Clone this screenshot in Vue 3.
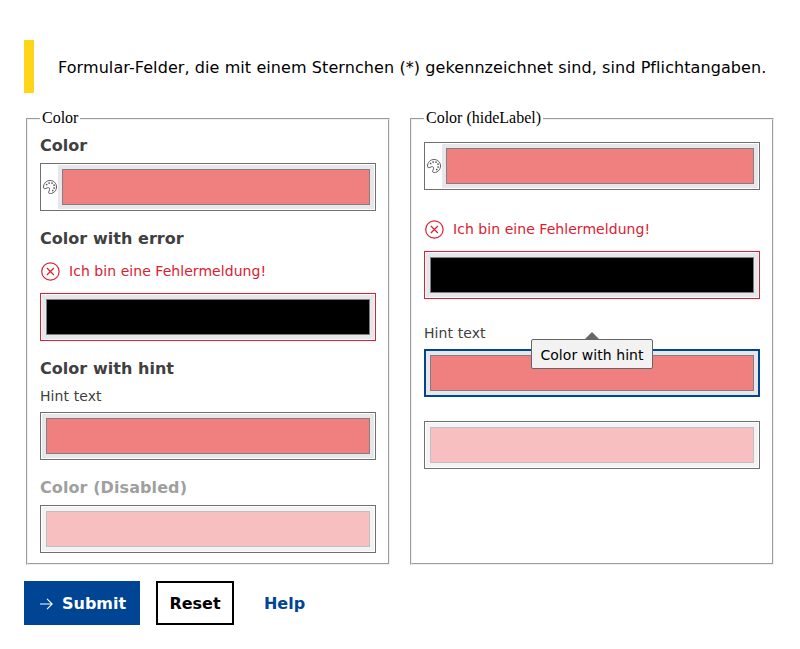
<script setup>
const columns = [
  {
    legend: 'Color',
    fields: [
      { label: 'Color', icon: true },
      { label: 'Color with error', error: 'Ich bin eine Fehlermeldung!', state: 'invalid' },
      { label: 'Color with hint', hint: 'Hint text' },
      { label: 'Color (Disabled)', state: 'disabled' }
    ]
  },
  {
    legend: 'Color (hideLabel)',
    hideLabel: true,
    fields: [
      { icon: true },
      { error: 'Ich bin eine Fehlermeldung!', state: 'invalid' },
      { hint: 'Hint text', state: 'focused', tooltip: 'Color with hint' },
      { state: 'disabled' }
    ]
  }
]
</script>

<template>
  <main class="page">
    <p class="notice"><span class="notice-text">Formular-Felder, die mit einem Sternchen (*) gekennzeichnet sind, sind Pflichtangaben.</span></p>

    <div class="columns">
      <fieldset v-for="col in columns" :key="col.legend" :class="{ compact: col.hideLabel }">
        <legend>{{ col.legend }}</legend>
        <div v-for="(f, i) in col.fields" :key="i" class="group" :class="[f.state, { 'with-error': f.error, 'with-hint': f.hint }]">
          <div v-if="f.label" class="label">{{ f.label }}</div>
          <div v-if="f.error" class="error">
            <svg width="20" height="20" viewBox="0 0 20 20" fill="none" stroke="currentColor" stroke-width="1.2">
              <circle cx="10.4" cy="10.5" r="8.7" />
              <path d="M6.9 7l7 7M13.9 7l-7 7" />
            </svg>
            <span>{{ f.error }}</span>
          </div>
          <div v-if="f.hint" class="hint">{{ f.hint }}</div>
          <div class="field">
            <span v-if="f.icon" class="icon">
              <svg width="14" height="14" viewBox="0 0 14 14" fill="none" stroke="#555" stroke-width="1">
                <path d="M.5 7.3C.5 3.4 3.4.5 7.1.5s6.4 2.9 6.4 6.5-2.8 6.5-6.2 6.5c-1.7 0-2-.8-1.5-1.9.6-1.2 1-2.2.7-3.1-.4-1-1.6-1.1-2.6-.5-1.3.8-3.4 1.200-3.400-.7z" />
                <g fill="#555" stroke="none">
                  <rect x="2.9" y="3.8" width="1.500" height="1.500" /><rect x="5.400" y="2.300" width="1.500" height="1.500" />
                  <rect x="8.300" y="2.400" width="1.500" height="1.500" /><rect x="10.300" y="4.400" width="1.500" height="1.500" />
                  <rect x="10.400" y="7.300" width="1.500" height="1.500" /><rect x="9" y="9.800" width="1.500" height="1.500" />
                </g>
              </svg>
            </span>
            <span class="well"><span class="swatch"></span></span>
            <span v-if="f.tooltip" class="tooltip">{{ f.tooltip }}</span>
          </div>
        </div>
      </fieldset>
    </div>

    <div class="actions">
      <button type="button" class="submit">
        <svg width="14" height="14" viewBox="0 0 14 14" fill="none" stroke="currentColor" stroke-width="1.1">
          <path d="M1 8h12M8 2.800l5.200 5.200L8 13.200" />
        </svg>
        <span>Submit</span>
      </button>
      <button type="button" class="reset">Reset</button>
      <button type="button" class="help">Help</button>
    </div>
  </main>
</template>

<style>
body { margin: 0; background: #fff; }
</style>

<style scoped>
* { box-sizing: border-box; }
.page {
  width: 800px;
  height: 649px;
  padding: 40px 24px 0;
  overflow: hidden;
  font-family: Verdana, "DejaVu Sans", sans-serif;
  font-size: 16px;
  color: #000;
}
.notice {
  height: 53px;
  margin: 0;
  padding: 2px 0 0 24px;
  border-left: 10px solid #ffd51a;
  display: flex;
  align-items: center;
  letter-spacing: 0.083px;
  white-space: nowrap;
}
.columns {
  display: grid;
  grid-template-columns: 1fr 1fr;
  gap: 20px;
  padding: 16px 2px 0;
}
fieldset {
  min-width: 0;
  height: 456px;
  margin: 0;
  padding: 5px 12px 10px;
  border: 2px groove #f0f0f0;
}
fieldset.compact { padding-top: 13px; }
legend {
  height: 20px;
  padding: 0 2px;
  font-family: "Liberation Serif", serif;
  line-height: 18px;
}
.group + .group { margin-top: 16px; }
.compact .group.with-error { margin-top: 27px; }
.compact .group.with-hint { margin-top: 22px; }
.compact .group.disabled { margin-top: 24px; }
.label {
  height: 24px;
  margin-bottom: 5px;
  line-height: 24px;
  font-weight: 700;
  letter-spacing: 0.04px;
  color: #404040;
}
.with-error .label { margin-bottom: 8px; }
.with-hint .label { margin-bottom: 3px; }
.disabled .label { letter-spacing: 0.09px; color: #9f9f9f; }
.error {
  display: flex;
  align-items: center;
  gap: 9px;
  height: 24px;
  margin-bottom: 10px;
  font-size: 14px;
  letter-spacing: 0.05px;
  color: #da2131;
}
.hint {
  height: 24px;
  margin-bottom: 4px;
  line-height: 24px;
  font-size: 14px;
  letter-spacing: 0.09px;
  color: #404040;
}
.field {
  position: relative;
  display: flex;
  height: 48px;
  padding: 1px;
  border: 1px solid #707070;
  background: #fff;
}
.invalid .field { border-color: #da2131; }
.focused .field { padding: 0; border: 2px solid #004494; }
.icon {
  width: 16px;
  display: flex;
  align-items: center;
  padding-left: 1px;
}
.well {
  flex: 1;
  display: flex;
  padding: 4px;
  background: #e7e7eb;
}
.swatch {
  flex: 1;
  border: 1px solid #808080;
  background: #f08080;
}
.invalid .swatch { background: #000; }
.disabled .well { background: #f3f3f5; }
.disabled .swatch { border-color: #c0c0c0; background: #f7bfbf; }
.tooltip {
  position: absolute;
  left: 105px;
  top: -12px;
  width: 122px;
  height: 30px;
  border: 1px solid #666;
  border-radius: 2px;
  background: #f2f2f2;
  font-size: 14px;
  line-height: 30px;
  letter-spacing: 0.06px;
  text-align: center;
  white-space: nowrap;
}
.tooltip::before {
  content: "";
  position: absolute;
  left: 53px;
  top: -8px;
  border: 7px solid transparent;
  border-top: 0;
  border-bottom-color: #666;
}
.actions {
  display: flex;
  gap: 16px;
  margin-top: 16px;
}
button {
  height: 44px;
  margin: 0;
  padding: 0;
  border: 0;
  background: none;
  font: 700 16px Verdana, "DejaVu Sans", sans-serif;
}
.submit {
  width: 116px;
  padding-left: 15px;
  display: flex;
  align-items: center;
  gap: 9px;
  background: #004494;
  color: #fff;
}
.reset { width: 78px; border: 2px solid #000; color: #000; }
.help { width: 69px; color: #004494; }
</style>
